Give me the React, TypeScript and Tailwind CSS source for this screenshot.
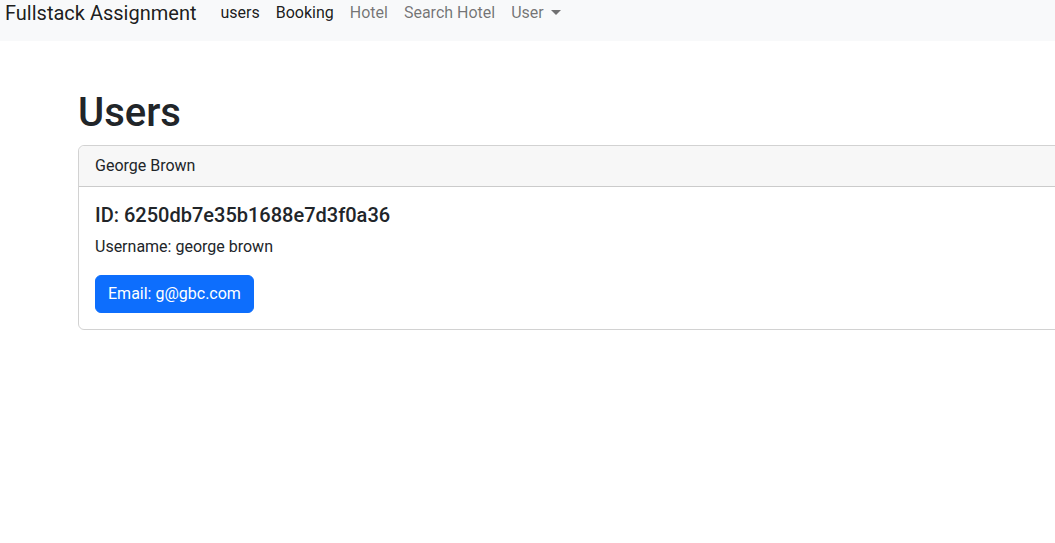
import React from "react";

export default function App() {
  return (
    <div className="w-full min-h-[543px] overflow-hidden bg-white text-[#212529] font-['Roboto',sans-serif]">
      <nav className="h-[41px] bg-[#f8f9fa] flex items-start pl-[5px]">
        <a className="text-[20px] leading-[26px] text-black/90 mr-4 whitespace-nowrap">Fullstack Assignment</a>
        <ul className="flex items-start text-[16px] leading-[24px] whitespace-nowrap pt-[1px]">
          <li className="px-2 text-black/90">users</li>
          <li className="px-2 text-black/90">Booking</li>
          <li className="px-2 text-black/55">Hotel</li>
          <li className="px-2 text-black/55">Search Hotel</li>
          <li className="px-2 text-black/55 flex items-center">
            User
            <span className="ml-[7px] -mt-[1px] w-0 h-0 border-t-[5px] border-t-black/55 border-x-[5px] border-x-transparent" />
          </li>
        </ul>
      </nav>
      <div className="pl-[78px] pt-[48px]">
        <h1 className="text-[40px] leading-[48px] font-medium mb-2">Users</h1>
        <div className="w-[1100px] border border-black/[0.175] rounded-[6px]">
          <div className="bg-[#f7f7f7] border-b border-black/[0.175] px-4 py-2 text-[16px] leading-[24px] rounded-t-[6px]">
            George Brown
          </div>
          <div className="p-4">
            <h5 className="text-[20px] leading-[24px] font-medium mb-2">ID: 6250db7e35b1688e7d3f0a36</h5>
            <p className="text-[16px] leading-[24px] mb-4">Username: george brown</p>
            <button className="bg-[#0d6efd] text-white text-[16px] leading-[24px] px-3 py-[6px] border border-[#0d6efd] rounded-[6px]">
              Email: g@gbc.com
            </button>
          </div>
        </div>
      </div>
    </div>
  );
}
